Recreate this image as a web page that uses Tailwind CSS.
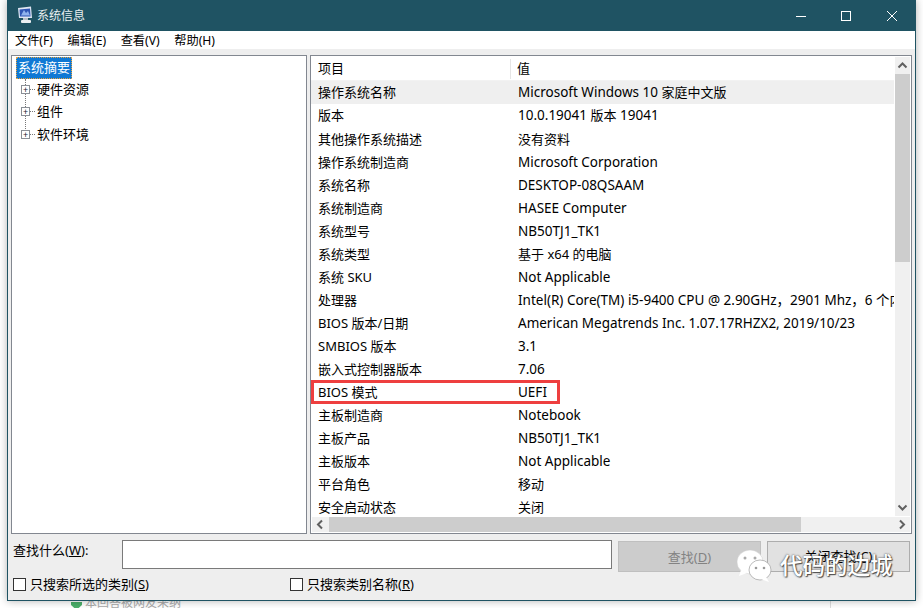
<!DOCTYPE html>
<html><head><meta charset="utf-8"><script src="https://cdn.jsdelivr.net/npm/@tailwindcss/browser@4"></script></head>
<body class="bg-white">
<div class="relative w-[923px] h-[608px] overflow-hidden bg-white font-['Noto_Sans','Noto_Sans_CJK_SC',sans-serif] text-[13px] text-black">
  <div class="absolute left-[71px] top-[594px] flex items-center gap-[3px] text-[#aaa] text-[12px]">
    <svg width="11" height="14" viewBox="0 0 11 14"><path d="M0 6H11V9L5.500 14 0 9Z" fill="#4caf6a"/></svg><span>本回答被网友采纳</span>
  </div>
  <div class="absolute left-[830px] top-[598px] h-[10px] border-l border-[#ddd]"></div>
  <div class="absolute left-[7px] top-0 w-[909px] h-[601px] bg-[#eeeeee] border border-[#1f5363] border-t-0 shadow-[0_0_8px_rgba(0,0,0,0.3)] flex flex-col">
    <div class="h-[31px] bg-[#1f5363] flex items-center shrink-0 text-white">
      <svg class="ml-[9px]" width="16" height="20" viewBox="0 0 16 20"><path d="M1 2 14 0.500 15 12 2 12Z" fill="#dfe6f2"/><path d="M2.500 3.500 13 2.500 13.500 10.500 3 10.500Z" fill="#2f55b5"/><path d="M4 9.500 7 4l2 3 2-2 2 4.500z" fill="#8fb2ee"/><rect x="6" y="12" width="5" height="2" fill="#b9c0c9"/><rect x="4" y="14" width="10" height="3" rx="1" fill="#eceff2"/></svg>
      <span class="ml-[4px] text-[12px] text-[#e8eef0]">系统信息</span>
      <div class="ml-auto flex items-center">
        <svg width="12" height="12" viewBox="0 0 12 12" class="mr-[33px]"><path d="M1 6.500H11" stroke="#fff" fill="none"/></svg>
        <svg width="12" height="12" viewBox="0 0 12 12" class="mr-[34px]"><rect x="1.500" y="1.500" width="9" height="9" stroke="#fff" fill="none"/></svg>
        <svg width="12" height="12" viewBox="0 0 12 12" class="mr-[17px]"><path d="M1 1 11 11M11 1 1 11" stroke="#fff" fill="none"/></svg>
      </div>
    </div>
    <div class="h-[18px] bg-white flex items-center shrink-0 pl-[7px] pt-[2px] gap-[14.600px] text-[12.200px]">
      <span>文件(F)</span><span>编辑(E)</span><span>查看(V)</span><span>帮助(H)</span>
    </div>
    <div class="flex gap-[3px] pl-[3px] pr-[3px] pt-[6px] h-[485px] shrink-0">
      <div class="w-[296px] h-[479px] bg-white border border-[#828790] relative pl-[4px] pt-[1px]">
        <div class="w-[56px] h-[22px] bg-[#0f78d4] border border-dotted border-[#e8a33d] text-white flex items-center justify-center">系统摘要</div>
        <div class="absolute left-[13px] top-[23px] h-[56px] w-0 border-l border-dotted border-[#777]"></div>
        <div class="flex flex-col -mt-[1px] pl-[1px]">
          <div class="h-[22.500px] flex items-center relative"><span class="w-[9px] h-[9px] ml-[4px] border border-[#8a8f96] bg-white flex items-center justify-center text-[#223] text-[9px] leading-none">+</span><span class="w-[5px] border-t border-dotted border-[#777]"></span><span class="ml-[2px]">硬件资源</span></div>
          <div class="h-[22.500px] flex items-center relative"><span class="w-[9px] h-[9px] ml-[4px] border border-[#8a8f96] bg-white flex items-center justify-center text-[#223] text-[9px] leading-none">+</span><span class="w-[5px] border-t border-dotted border-[#777]"></span><span class="ml-[2px]">组件</span></div>
          <div class="h-[22.500px] flex items-center relative"><span class="w-[9px] h-[9px] ml-[4px] border border-[#8a8f96] bg-white flex items-center justify-center text-[#223] text-[9px] leading-none">+</span><span class="w-[5px] border-t border-dotted border-[#777]"></span><span class="ml-[2px]">软件环境</span></div>
        </div>
      </div>
      <div class="w-[602px] h-[479px] bg-white border border-[#828790] relative overflow-hidden">
        <div class="w-[583px] h-[460px] overflow-hidden">
          <div class="h-[25px] pt-[2px] flex items-center border-b border-[#f2f2f2]"><span class="w-[200px] shrink-0 pl-[7px] border-r border-[#e5e5e5]">项目</span><span class="pl-[6px]">值</span></div>
          <div class="flex flex-col">
            <div class="h-[23px] flex items-center bg-[#efefef] whitespace-nowrap"><span class="w-[200px] shrink-0 pl-[7px]">操作系统名称</span><span class="pl-[7px] text-[13.500px]">Microsoft Windows 10 <span class="text-[13px]">家庭中文版</span></span></div>
            <div class="h-[23px] flex items-center whitespace-nowrap"><span class="w-[200px] shrink-0 pl-[7px]">版本</span><span class="pl-[7px] text-[13.500px]">10.0.19041 <span class="text-[13px]">版本</span> 19041</span></div>
            <div class="h-[23px] pt-[2px] flex items-center whitespace-nowrap"><span class="w-[200px] shrink-0 pl-[7px]">其他操作系统描述</span><span class="pl-[7px]">没有资料</span></div>
            <div class="h-[23px] pt-[2px] flex items-center whitespace-nowrap"><span class="w-[200px] shrink-0 pl-[7px]">操作系统制造商</span><span class="pl-[7px] text-[13.500px]">Microsoft Corporation</span></div>
            <div class="h-[23px] pt-[2px] flex items-center whitespace-nowrap"><span class="w-[200px] shrink-0 pl-[7px]">系统名称</span><span class="pl-[7px] text-[13.500px]">DESKTOP-08QSAAM</span></div>
            <div class="h-[23px] pt-[2px] flex items-center whitespace-nowrap"><span class="w-[200px] shrink-0 pl-[7px]">系统制造商</span><span class="pl-[7px] text-[13.500px]">HASEE Computer</span></div>
            <div class="h-[23px] pt-[2px] flex items-center whitespace-nowrap"><span class="w-[200px] shrink-0 pl-[7px]">系统型号</span><span class="pl-[7px] text-[13.500px]">NB50TJ1_TK1</span></div>
            <div class="h-[23px] pt-[2px] flex items-center whitespace-nowrap"><span class="w-[200px] shrink-0 pl-[7px]">系统类型</span><span class="pl-[7px]">基于 x64 的电脑</span></div>
            <div class="h-[23px] pt-[2px] flex items-center whitespace-nowrap"><span class="w-[200px] shrink-0 pl-[7px]">系统 SKU</span><span class="pl-[7px] text-[13.500px]">Not Applicable</span></div>
            <div class="h-[23px] pt-[2px] flex items-center whitespace-nowrap"><span class="w-[200px] shrink-0 pl-[7px]">处理器</span><span class="pl-[7px] text-[13.500px]">Intel(R) Core(TM) i5-9400 CPU @ 2.90GHz，2901 Mhz，6 个内核，6 个逻辑处理器</span></div>
            <div class="h-[23px] pt-[2px] flex items-center whitespace-nowrap"><span class="w-[200px] shrink-0 pl-[7px]">BIOS 版本/日期</span><span class="pl-[7px] text-[13.500px]">American Megatrends Inc. 1.07.17RHZX2, 2019/10/23</span></div>
            <div class="h-[23px] pt-[2px] flex items-center whitespace-nowrap"><span class="w-[200px] shrink-0 pl-[7px]">SMBIOS 版本</span><span class="pl-[7px] text-[13.500px]">3.1</span></div>
            <div class="h-[23px] pt-[2px] flex items-center whitespace-nowrap"><span class="w-[200px] shrink-0 pl-[7px]">嵌入式控制器版本</span><span class="pl-[7px] text-[13.500px]">7.06</span></div>
            <div class="h-[23px] pt-[2px] flex items-center whitespace-nowrap"><span class="w-[200px] shrink-0 pl-[7px]">BIOS 模式</span><span class="pl-[7px] text-[13.500px]">UEFI</span></div>
            <div class="h-[23px] pt-[2px] flex items-center whitespace-nowrap"><span class="w-[200px] shrink-0 pl-[7px]">主板制造商</span><span class="pl-[7px] text-[13.500px]">Notebook</span></div>
            <div class="h-[23px] pt-[2px] flex items-center whitespace-nowrap"><span class="w-[200px] shrink-0 pl-[7px]">主板产品</span><span class="pl-[7px] text-[13.500px]">NB50TJ1_TK1</span></div>
            <div class="h-[23px] pt-[2px] flex items-center whitespace-nowrap"><span class="w-[200px] shrink-0 pl-[7px]">主板版本</span><span class="pl-[7px] text-[13.500px]">Not Applicable</span></div>
            <div class="h-[23px] pt-[2px] flex items-center whitespace-nowrap"><span class="w-[200px] shrink-0 pl-[7px]">平台角色</span><span class="pl-[7px]">移动</span></div>
            <div class="h-[23px] pt-[2px] flex items-center whitespace-nowrap"><span class="w-[200px] shrink-0 pl-[7px]">安全启动状态</span><span class="pl-[7px]">关闭</span></div>
          </div>
        </div>
        <div class="absolute right-[1px] top-[1px] w-[15px] h-[459px] bg-[#f0f0f0] flex flex-col items-center">
          <svg class="shrink-0" width="15" height="17" viewBox="0 0 15 17"><path d="M3.500 10.500 7.500 6.500 11.500 10.500" stroke="#606060" stroke-width="2" fill="none"/></svg>
          <div class="w-[15px] h-[188px] bg-[#cdcdcd]"></div>
          <svg class="shrink-0 mt-auto" width="15" height="17" viewBox="0 0 15 17"><path d="M3.500 6.500 7.500 10.500 11.500 6.500" stroke="#606060" stroke-width="2" fill="none"/></svg>
        </div>
        <div class="absolute left-[1px] bottom-[1px] w-[598px] h-[15px] bg-[#f0f0f0] flex items-center">
          <svg class="shrink-0" width="17" height="15" viewBox="0 0 17 15"><path d="M10 3.500 6 7.500 10 11.500" stroke="#606060" stroke-width="2" fill="none"/></svg>
          <div class="w-[472px] h-[15px] bg-[#cdcdcd]"></div>
          <svg class="shrink-0 ml-auto" width="17" height="15" viewBox="0 0 17 15"><path d="M7 3.500 11 7.500 7 11.500" stroke="#606060" stroke-width="2" fill="none"/></svg>
        </div>
      </div>
    </div>
    <div class="flex items-start h-[31px] mt-[6px] shrink-0 pl-[5px]">
      <span class="w-[109px] h-[22px] flex items-center"><span>查找什么(<u>W</u>):</span></span>
      <div class="w-[490px] h-[29px] bg-white border border-[#7a7a7a]"></div>
      <div class="w-[143px] h-[31px] mt-[1px] ml-[6px] pt-[2px] bg-[#cccccc] border border-[#bfbfbf] text-[#838383] flex items-center justify-center">查找(<u>D</u>)</div>
      <div class="w-[143px] h-[31px] mt-[1px] ml-[6px] bg-[#e1e1e1] border border-[#adadad] flex items-center justify-center">关闭查找(<u>C</u>)</div>
    </div>
    <div class="flex items-center mt-[7px] h-[13px] shrink-0 pl-[5px]">
      <span class="w-[13px] h-[13px] border border-[#333] bg-white"></span>
      <span class="ml-[4px] w-[260px]">只搜索所选的类别(<u>S</u>)</span>
      <span class="w-[13px] h-[13px] border border-[#333] bg-white"></span>
      <span class="ml-[4px]">只搜索类别名称(<u>R</u>)</span>
    </div>
  </div>
  <div class="absolute left-[311px] top-[380px] w-[249px] h-[24px] border-[3px] border-[#ee3f3f]"></div>
  <div class="absolute left-[735px] top-[549px] flex items-center">
    <svg width="38" height="34" viewBox="0 0 38 34"><ellipse cx="15" cy="13" rx="13" ry="12" fill="#fff" stroke="#ccc" stroke-width=".5"/><path d="M6 21 4 27 12 24Z" fill="#fff"/><ellipse cx="25" cy="21" rx="11" ry="10" fill="#fff" stroke="#aaa" stroke-width=".8"/><path d="M31 28 34 33 26 30Z" fill="#fff"/><circle cx="10" cy="9" r="1.500" fill="#aaa"/><circle cx="20" cy="9" r="1.500" fill="#aaa"/><circle cx="21" cy="19" r="1.300" fill="#999"/><circle cx="29" cy="19" r="1.300" fill="#999"/></svg>
    <span class="ml-[7px] mt-[1px] text-[22.500px] leading-none font-medium text-white [text-shadow:0_0_2px_#333,1px_1px_1px_#555]">代码的边城</span>
  </div>
</div>
</body></html>
